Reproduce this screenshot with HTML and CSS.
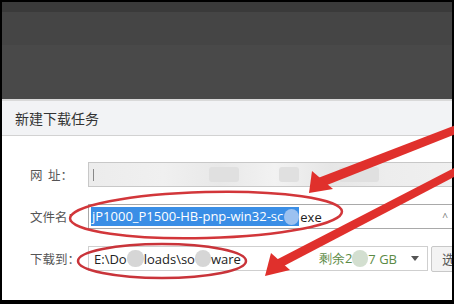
FILE: index.html
```html
<!DOCTYPE html>
<html>
<head>
<meta charset="utf-8">
<link rel="stylesheet" href="styles.css">
</head>
<body>
<div class="frame">
  <div class="backdrop">
    <div class="strip"></div>
    <div class="band"></div>
    <div class="band2"></div>
  </div>
  <div class="dialog">
    <div class="header">新建下载任务</div>
    <div class="content">
      <div class="row">
        <span class="label">网&nbsp;&nbsp;址：</span>
        <div class="input url">
          <span class="caret"></span>
          <span class="blur b1"></span>
          <span class="blur b2"></span>
          <span class="blur b3"></span>
        </div>
      </div>
      <div class="row">
        <span class="label">文件名：</span>
        <div class="input name">
          <span class="sel">jP1000_P1500-HB-pnp-win32-sc<span class="dot"></span></span><span class="ext">exe</span>
          <span class="up">^</span>
        </div>
      </div>
      <div class="row">
        <span class="label">下载到：</span>
        <div class="input path">
          <span class="ptext">E:\Do<span class="blob"></span>loads\so<span class="blob small"></span>ware</span>
          <span class="free">剩余2<span class="blob green"></span>7 GB</span>
          <span class="arrow"></span>
        </div>
        <div class="btn">选</div>
      </div>
    </div>
  </div>
  <svg class="marks" width="454" height="304" viewBox="0 0 454 304">
    <ellipse cx="206" cy="215" rx="136" ry="23" fill="none" stroke="#d2363a" stroke-width="2.5" transform="rotate(-1.5 206 215)"/>
    <ellipse cx="162" cy="261" rx="84" ry="17" fill="none" stroke="#c9343a" stroke-width="2.5"/>
    <polygon points="456,125 456,134 322,187 318,178" fill="#e0302c"/>
    <polygon points="309,193 312,171 333,189" fill="#e0302c"/>
    <polygon points="456,167 456,176 280,268 276,260" fill="#e0302c"/>
    <polygon points="265,276 271,253 290,270" fill="#e0302c"/>
  </svg>
</div>
</body>
</html>
```
FILE: styles.css
```css
html, body {
  margin: 0;
  padding: 0;
  background: #000;
}
.frame {
  position: relative;
  width: 454px;
  height: 304px;
  box-sizing: border-box;
  padding: 2px 2px 4px 2px;
  display: flex;
  flex-direction: column;
  overflow: hidden;
  font-family: "Noto Sans CJK SC", "Open Sans", sans-serif;
}
.backdrop {
  height: 97px;
  display: flex;
  flex-direction: column;
  background: #494949;
}
.strip { height: 10px; background: #3a3a3a; }
.band { height: 33px; background: #454545; }
.band2 { flex: 1; background: #494949; }
.dialog {
  flex: 1;
  display: flex;
  flex-direction: column;
  background: #fff;
  border-top: 2px solid #d9d9d9;
  overflow: hidden;
}
.header {
  height: 35px;
  box-sizing: border-box;
  background: #f2f3f5;
  border-bottom: 1px solid #d2d2d2;
  padding-left: 13px;
  line-height: 34px;
  font-size: 14px;
  color: #333;
}
.content {
  padding: 26px 0 0 28px;
  display: flex;
  flex-direction: column;
  gap: 17px;
}
.row {
  display: flex;
  align-items: center;
  height: 25px;
}
.label {
  width: 58px;
  font-size: 12.5px;
  color: #555;
  flex: none;
  white-space: nowrap;
}
.input {
  position: relative;
  height: 25px;
  box-sizing: border-box;
  border: 1px solid #c8c8c8;
  display: flex;
  align-items: center;
}
.url {
  flex: 1;
  margin-right: -10px;
  background: linear-gradient(90deg, #ececec 0%, #f0f0f0 20%, #e8e8e8 35%, #f2f2f2 50%, #e6e6e6 65%, #ededed 80%, #f0f0f0 100%);
}
.caret {
  width: 1px;
  height: 12px;
  background: #888;
  margin-left: 4px;
}
.blur {
  position: absolute;
  background: #e0e0e0;
  border-radius: 3px;
  top: 4px;
  height: 15px;
}
.b1 { left: 120px; width: 30px; }
.b2 { left: 190px; width: 20px; }
.b3 { left: 250px; width: 40px; }
.name {
  flex: 1;
  margin-right: -10px;
  border-color: #a9a9a9;
  font-family: "Open Sans", sans-serif;
  font-size: 13px;
  padding-left: 2px;
}
.sel {
  background: #3a8ee6;
  color: #fff;
  height: 19px;
  line-height: 19px;
  display: flex;
  align-items: center;
  padding-left: 1px;
}
.dot {
  display: inline-block;
  width: 15px;
  height: 16px;
  border-radius: 50%;
  background: #9cc1f0;
  margin-left: 1px;
}
.ext { color: #222; margin-left: 1px; }
.up {
  position: absolute;
  right: 13px;
  color: #777;
  font-size: 10px;
}
.path {
  width: 340px;
  flex: none;
  border-color: #cfcfcf;
  font-family: "Open Sans", sans-serif;
  font-size: 13px;
  padding-left: 5px;
}
.ptext { color: #222; display: flex; align-items: center; }
.blob {
  display: inline-block;
  width: 17px;
  height: 17px;
  border-radius: 8px;
  background: #d6d6d6;
}
.blob.small { width: 16px; }
.blob.green { background: #d3dfd0; width: 16px; }
.free {
  margin-left: auto;
  color: #5b8a45;
  display: flex;
  align-items: center;
  margin-right: 14px;
}
.arrow {
  width: 0;
  height: 0;
  border-left: 4px solid transparent;
  border-right: 4px solid transparent;
  border-top: 5px solid #555;
  margin-right: 8px;
}
.btn {
  margin-left: 3px;
  height: 26px;
  width: 40px;
  box-sizing: border-box;
  border: 1px solid #c8c8c8;
  border-radius: 2px;
  background: #f3f3f3;
  font-size: 13px;
  color: #555;
  line-height: 24px;
  padding-left: 10px;
  flex: none;
}
.marks {
  position: absolute;
  left: 0;
  top: 0;
  pointer-events: none;
}
```
